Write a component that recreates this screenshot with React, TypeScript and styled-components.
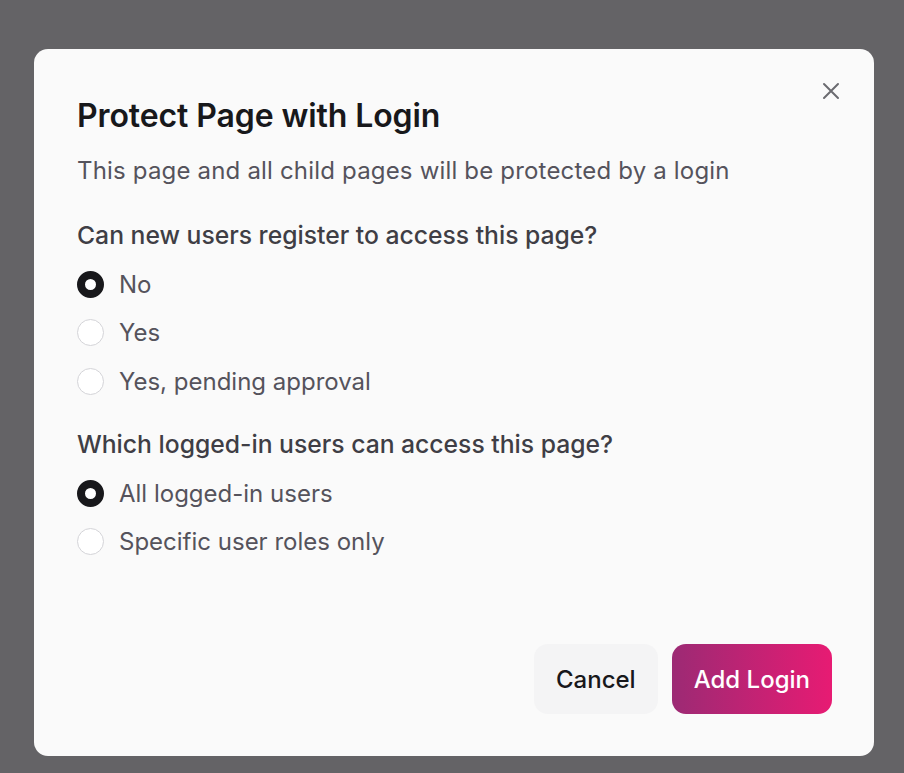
import React, { useState } from "react";
import styled, { createGlobalStyle } from "styled-components";

const Global = createGlobalStyle`
  html, body { margin: 0; padding: 0; }
  body {
    background: #646366;
    font-family: Inter, "Noto Sans", sans-serif;
  }
  * { box-sizing: border-box; }
`;

const Overlay = styled.div`
  width: 904px;
  height: 773px;
  padding: 49px 30px 17px 34px;
  background: #646366;
`;

const Dialog = styled.div`
  position: relative;
  width: 840px;
  height: 707px;
  background: #fafafa;
  border-radius: 14px;
  padding: 43px 42px 42px 43px;
  display: flex;
  flex-direction: column;
`;

const CloseButton = styled.button`
  position: absolute;
  top: 31px;
  right: 32px;
  width: 22px;
  height: 22px;
  padding: 0;
  border: 0;
  background: transparent;
  color: #6b6b70;
  display: flex;
  align-items: center;
  justify-content: center;
  cursor: pointer;
`;

const Title = styled.h2`
  margin: 0;
  font-size: 32px;
  line-height: 48px;
  font-weight: 600;
  color: #18181b;
  letter-spacing: -0.1px;
`;

const Subtitle = styled.p`
  margin: 14px 0 0;
  font-size: 24px;
  line-height: 34px;
  color: #55535c;
  letter-spacing: 0.18px;
`;

const Question = styled.div<{ $top: number }>`
  margin-top: ${(p) => p.$top}px;
  font-size: 24.7px;
  line-height: 34px;
  font-weight: 500;
  color: #3f3e45;
`;

const Options = styled.div`
  margin-top: 15px;
  display: flex;
  flex-direction: column;
  gap: 14.5px;
`;

const OptionRow = styled.label`
  display: flex;
  align-items: center;
  gap: 15px;
  height: 34px;
  font-size: 24px;
  color: #55535c;
  cursor: pointer;
`;

const Dot = styled.span<{ $checked: boolean }>`
  width: 27px;
  height: 27px;
  border-radius: 50%;
  flex-shrink: 0;
  background: #fff;
  border: ${(p) => (p.$checked ? "8.5px solid #18181b" : "1px solid #d4d4d8")};
`;

const Footer = styled.div`
  margin-top: auto;
  display: flex;
  justify-content: flex-end;
  gap: 14px;
`;

const Button = styled.button<{ $primary?: boolean }>`
  height: 70px;
  padding: 0 22px;
  border: 0;
  border-radius: 14px;
  font-family: inherit;
  font-size: 24px;
  font-weight: 500;
  cursor: pointer;
  color: ${(p) => (p.$primary ? "#ffffff" : "#18181b")};
  background: ${(p) =>
    p.$primary ? "linear-gradient(90deg, #9c2a74 0%, #e71b73 100%)" : "#f4f4f5"};
`;

type Opt = { value: string; label: string };

function RadioGroup({ options, value, onChange }: { options: Opt[]; value: string; onChange: (v: string) => void }) {
  return (
    <Options>
      {options.map((o) => (
        <OptionRow key={o.value} onClick={() => onChange(o.value)}>
          <Dot $checked={value === o.value} />
          {o.label}
        </OptionRow>
      ))}
    </Options>
  );
}

export default function App() {
  const [reg, setReg] = useState("no");
  const [who, setWho] = useState("all");
  return (
    <>
      <Global />
      <Overlay>
        <Dialog>
          <CloseButton aria-label="Close">
            <svg width="18" height="18" viewBox="0 0 18 18" fill="none" stroke="currentColor" strokeWidth="2" strokeLinecap="round">
              <path d="M2 2L16 16M16 2L2 16" />
            </svg>
          </CloseButton>
          <Title>Protect Page with Login</Title>
          <Subtitle>This page and all child pages will be protected by a login</Subtitle>
          <Question $top={30}>Can new users register to access this page?</Question>
          <RadioGroup
            value={reg}
            onChange={setReg}
            options={[
              { value: "no", label: "No" },
              { value: "yes", label: "Yes" },
              { value: "pending", label: "Yes, pending approval" },
            ]}
          />
          <Question $top={29}>Which logged-in users can access this page?</Question>
          <RadioGroup
            value={who}
            onChange={setWho}
            options={[
              { value: "all", label: "All logged-in users" },
              { value: "roles", label: "Specific user roles only" },
            ]}
          />
          <Footer>
            <Button>Cancel</Button>
            <Button $primary>Add Login</Button>
          </Footer>
        </Dialog>
      </Overlay>
    </>
  );
}
